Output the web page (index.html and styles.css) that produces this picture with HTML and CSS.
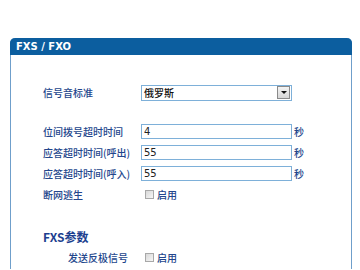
FILE: index.html
```html
<!DOCTYPE html>
<html lang="zh-CN">
<head>
  <meta charset="UTF-8">
  <meta name="viewport" content="width=device-width, initial-scale=1.0">
  <title>FXS / FXO</title>
  <link rel="stylesheet" href="styles.css">
</head>
<body>
  <div class="panel">
    <div class="panel-head">FXS / FXO</div>
    <div class="panel-body">
      <!-- 信号音 -->
      <div class="row row-select">
        <label>信号音标准</label>
        <div class="select">
          <span class="select-text">俄罗斯</span>
          <span class="select-btn"><i></i></span>
        </div>
      </div>

      <!-- 超时设置 -->
      <div class="group">
        <div class="row">
          <label>位间拨号超时时间</label>
          <input type="text" value="4">
          <span class="unit">秒</span>
        </div>
        <div class="row">
          <label>应答超时时间(呼出)</label>
          <input type="text" value="55">
          <span class="unit">秒</span>
        </div>
        <div class="row">
          <label>应答超时时间(呼入)</label>
          <input type="text" value="55">
          <span class="unit">秒</span>
        </div>
        <div class="row">
          <label>断网逃生</label>
          <span class="check"><input type="checkbox">启用</span>
        </div>
      </div>

      <h3>FXS参数</h3>
      <div class="row row-sub">
        <label>发送反极信号</label>
        <span class="check"><input type="checkbox">启用</span>
      </div>
    </div>
  </div>
</body>
</html>
```

FILE: styles.css
```css
body {
  margin: 0;
  background: #fff;
  font-family: "Noto Sans CJK SC", "DejaVu Sans", sans-serif;
  font-size: 10px;
  font-weight: 500;
  color: #23468c;
  overflow: hidden;
}
.panel {
  margin: 38px 0 0 10px;
  width: 340px;
  height: 231px;
  border: 1px solid #6f9fcb;
  border-top: none;
  border-bottom: none;
  border-radius: 5px 5px 0 0;
}
.panel-head {
  height: 17px;
  line-height: 17px;
  margin: 0 -1px;
  padding-left: 6px;
  background: #0c5e9f;
  border-radius: 5px 5px 0 0;
  color: #fff;
  font-family: "DejaVu Sans", sans-serif;
  font-weight: bold;
  font-size: 10px;
}
.panel-body {
  padding: 27px 0 0 32px;
}
.row {
  display: flex;
  align-items: center;
  height: 21px;
}
.row label {
  width: 98px;
  flex: none;
  white-space: nowrap;
}
.select {
  display: flex;
  align-items: center;
  width: 147px;
  height: 14px;
  border: 1px solid #7eb0d9;
  color: #111;
  padding-left: 2px;
}
.select-text {
  flex: 1;
  line-height: 14px;
}
.select-btn {
  width: 13px;
  height: 13px;
  margin-right: 1px;
  background: linear-gradient(#f4f4f4, #d6d6d6);
  border: 1px solid #8a8a8a;
  box-sizing: border-box;
  display: flex;
  align-items: center;
  justify-content: center;
}
.select-btn i {
  width: 0;
  height: 0;
  border-left: 3px solid transparent;
  border-right: 3px solid transparent;
  border-top: 3px solid #111;
}
.group {
  margin-top: 18px;
}
input[type="text"] {
  width: 151px;
  height: 15px;
  box-sizing: border-box;
  border: 1px solid #7eb0d9;
  padding: 0 2px;
  font-family: "DejaVu Sans", sans-serif;
  font-size: 10px;
  color: #222;
  outline: none;
}
.unit {
  margin-left: 2px;
}
.check {
  display: flex;
  align-items: center;
  margin-left: 4px;
}
.check input {
  appearance: none;
  width: 9px;
  height: 9px;
  margin: 0 3px 0 0;
  border: 1px solid #a8a8a8;
  background: linear-gradient(135deg, #d8d8d8, #f6f6f6);
}
h3 {
  margin: 22px 0 0;
  height: 20px;
  line-height: 20px;
  font-size: 12px;
  font-weight: bold;
  color: #1d3f8f;
}
.row-sub label {
  padding-left: 25px;
  width: 73px;
}
```
